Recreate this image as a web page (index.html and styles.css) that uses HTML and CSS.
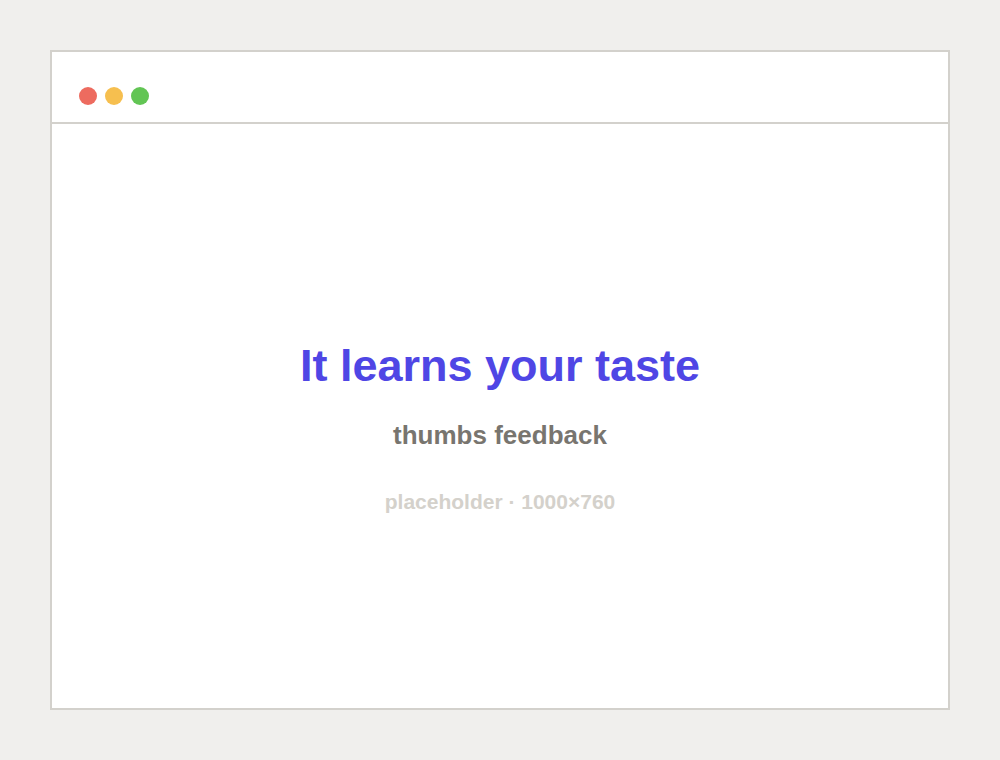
FILE: index.html
```html
<!DOCTYPE html>
<html lang="en">
<head>
<meta charset="utf-8">
<title>It learns your taste</title>
<link rel="stylesheet" href="styles.css">
</head>
<body>
<div class="window">
  <div class="titlebar">
    <span class="dot dot-red"></span>
    <span class="dot dot-yellow"></span>
    <span class="dot dot-green"></span>
  </div>
  <div class="content">
    <h1 class="title">It learns your taste</h1>
    <p class="subtitle">thumbs feedback</p>
    <p class="note">placeholder · 1000×760</p>
  </div>
</div>
</body>
</html>
```

FILE: styles.css
```css
html, body {
  margin: 0;
  padding: 0;
}
body {
  background: #f0efed;
  font-family: "Liberation Sans", Arial, sans-serif;
  padding: 50px;
  width: 900px;
  height: 660px;
}
.window {
  box-sizing: border-box;
  width: 900px;
  height: 660px;
  background: #ffffff;
  border: 2px solid #d3d1cc;
  display: flex;
  flex-direction: column;
}
.titlebar {
  display: flex;
  gap: 8px;
  padding: 35px 27px 17px;
  border-bottom: 2px solid #d3d1cc;
}
.dot {
  width: 18px;
  height: 18px;
  border-radius: 50%;
}
.dot-red { background: #ed6b5f; }
.dot-yellow { background: #f6bf4f; }
.dot-green { background: #62c554; }
.content {
  flex: 1;
  display: flex;
  flex-direction: column;
  align-items: center;
  justify-content: center;
  text-align: center;
  padding-top: 22px;
}
.title {
  margin: 0;
  font-size: 45px;
  line-height: 52px;
  font-weight: 700;
  color: #4f46e5;
}
.subtitle {
  margin: 28px 0 0;
  font-size: 26px;
  line-height: 30px;
  font-weight: 700;
  color: #78756f;
}
.note {
  margin: 40px 0 0;
  font-size: 21px;
  line-height: 24px;
  font-weight: 700;
  color: #d4d1cb;
}
```
